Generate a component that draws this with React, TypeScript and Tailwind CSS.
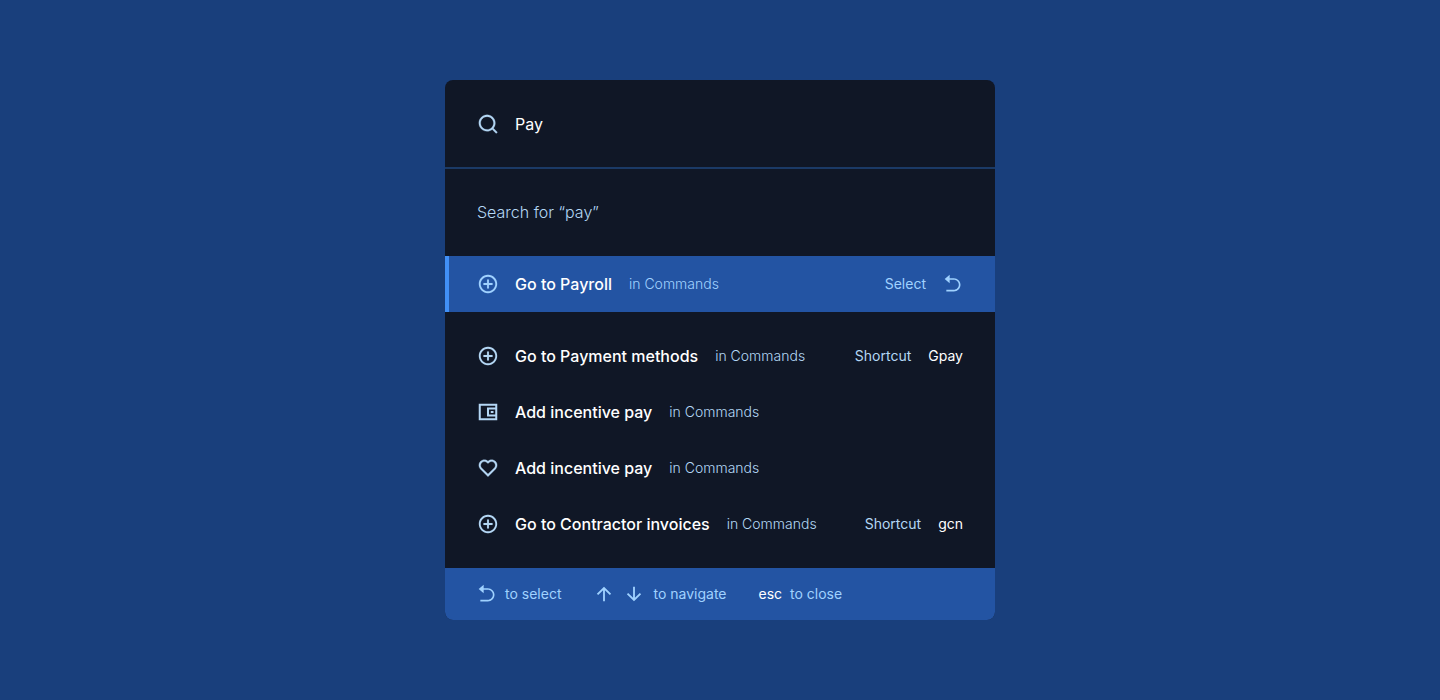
import { useState, type ReactNode } from "react";
import {
  RiAddCircleLine,
  RiArrowDownLine,
  RiArrowGoBackFill,
  RiArrowUpLine,
  RiHeartLine,
  RiSearchLine,
} from "react-icons/ri";

function WalletIcon() {
  return (
    <svg viewBox="0 0 24 24" className="size-[22px]" fill="none" stroke="currentColor" strokeWidth="2.2" aria-hidden="true">
      <path d="M3 4h18v16H3z" />
      <path d="M21 8.2h-9v7.6h9" />
      <path d="M15 12h3" />
    </svg>
  );
}

type Command = {
  id: string;
  label: string;
  icon: ReactNode;
  shortcut?: string;
};

const plus = <RiAddCircleLine className="size-[22px] [stroke-width:0.1]" aria-hidden="true" />;

const commands: Command[] = [
  { id: "methods", label: "Go to Payment methods", icon: plus, shortcut: "Gpay" },
  { id: "incentive", label: "Add incentive pay", icon: <WalletIcon /> },
  {
    id: "incentive-favourite",
    label: "Add incentive pay",
    icon: <RiHeartLine className="size-[22px] [stroke-width:0.3]" aria-hidden="true" />,
  },
  { id: "invoices", label: "Go to Contractor invoices", icon: plus, shortcut: "gcn" },
];

function CommandText({ label }: { label: string }) {
  return (
    <span className="flex items-center gap-[17px]">
      <span className="text-base font-medium text-white">{label}</span>
      <span className="text-sm font-light">in Commands</span>
    </span>
  );
}

export default function App() {
  const [query, setQuery] = useState("Pay");

  return (
    <main className="min-h-screen bg-[#193f7c] px-4 py-20 font-['Inter',sans-serif]">
      <section aria-label="Command palette" className="mx-auto max-w-[550px] overflow-hidden rounded-lg bg-[#101726] text-[#b4d7f5]">
        <label className="flex items-center gap-4 border-b-2 border-[#1b3a66] px-8 pt-8 pb-[31px]">
          <RiSearchLine className="size-[22px] [stroke-width:0.3]" aria-hidden="true" />
          <input
            aria-label="Search commands"
            value={query}
            onChange={(event) => setQuery(event.target.value)}
            className="h-6 min-w-0 flex-1 bg-transparent text-base text-white outline-none"
          />
        </label>
        <p className="px-8 pt-[31px] pb-8 text-base font-light">Search for “pay”</p>

        <button type="button" className="flex h-14 w-full items-center gap-4 border-l-4 border-[#4190f7] bg-[#2354a3] pr-8 pl-7 text-left text-[#a0d2ff]">
          {plus}
          <CommandText label="Go to Payroll" />
          <span className="ml-auto flex items-center gap-[17px] text-sm">
            Select
            <RiArrowGoBackFill className="size-5" aria-hidden="true" />
          </span>
        </button>

        <ul className="py-4">
          {commands.map((command) => (
            <li key={command.id}>
              <button type="button" className="flex h-14 w-full items-center gap-4 px-8 text-left">
                {command.icon}
                <CommandText label={command.label} />
                {command.shortcut && (
                  <span className="ml-auto flex items-center gap-[17px] text-sm">
                    Shortcut
                    <kbd className="font-['Inter',sans-serif] text-white">{command.shortcut}</kbd>
                  </span>
                )}
              </button>
            </li>
          ))}
        </ul>

        <footer className="flex h-[52px] items-center gap-8 bg-[#2354a3] px-8 text-sm text-[#a0d2ff]">
          <span className="flex items-center gap-2">
            <RiArrowGoBackFill className="size-5" aria-hidden="true" />
            to select
          </span>
          <span className="flex items-center gap-2">
            <RiArrowUpLine className="size-[22px]" aria-hidden="true" />
            <RiArrowDownLine className="size-[22px]" aria-hidden="true" />
            to navigate
          </span>
          <span className="flex items-center gap-2">
            <kbd className="font-['Inter',sans-serif] text-white">esc</kbd>
            to close
          </span>
        </footer>
      </section>
    </main>
  );
}
